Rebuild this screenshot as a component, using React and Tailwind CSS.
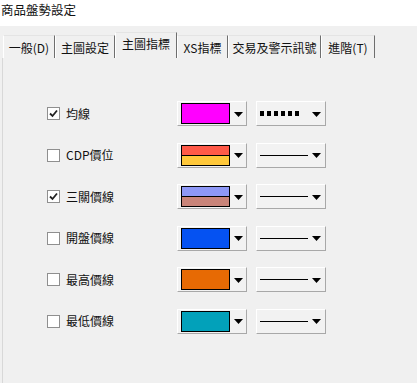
import React from "react";

const tabs = [
  { label: "一般(D)", w: "w-[52px]" },
  { label: "主圖設定", w: "w-[60px]" },
  { label: "主圖指標", w: "w-[62px]", active: true },
  { label: "XS指標", w: "w-[51px]" },
  { label: "交易及警示訊號", w: "w-[93px]" },
  { label: "進階(T)", w: "w-[54px]" },
];

const rows = [
  { label: "均線", checked: true, colors: ["#ff00ff"], dotted: true },
  { label: "CDP價位", colors: ["#ff5a48", "#ffc83a"] },
  { label: "三關價線", checked: true, colors: ["#8e98f6", "#c98479"] },
  { label: "開盤價線", colors: ["#0552f2"] },
  { label: "最高價線", colors: ["#e76a04"] },
  { label: "最低價線", colors: ["#02a1ba"] },
];

function Arrow() {
  return (
    <svg width="9" height="5" viewBox="0 0 9 5" aria-hidden>
      <path d="M0 0H9L4.5 5Z" fill="#000" />
    </svg>
  );
}

function Checkbox({ checked }) {
  return (
    <div className="flex h-[13px] w-[13px] items-center justify-center border border-[#8f8f8f] bg-white">
      {checked && (
        <svg width="9" height="9" viewBox="0 0 9 9" aria-hidden>
          <path d="M1 4.5L3.5 7L8 1.5" fill="none" stroke="#222" strokeWidth="1.8" />
        </svg>
      )}
    </div>
  );
}

function ColorCombo({ colors }) {
  return (
    <div className="flex h-[25px] w-[70px] items-center border border-b-[#a8a8a8] border-l-white border-r-[#a8a8a8] border-t-white bg-[#f2f2f2] pl-[3px]">
      <div className="flex h-[21px] w-[49px] flex-col border border-black">
        {colors.map((c, i) => (
          <div
            key={i}
            className={i > 0 ? "flex-1 border-t border-black" : "flex-1"}
            style={{ backgroundColor: c }}
          />
        ))}
      </div>
      <div className="flex flex-1 justify-center pt-[1px]">
        <Arrow />
      </div>
    </div>
  );
}

function StyleCombo({ dotted }) {
  return (
    <div className="flex h-[25px] w-[70px] items-center border border-b-[#a8a8a8] border-l-white border-r-[#a8a8a8] border-t-white bg-[#f2f2f2] pl-[3px] pr-[4px]">
      {dotted ? (
        <div className="flex w-[44px] gap-[3px]">
          {[0, 1, 2, 3, 4, 5].map((i) => (
            <div key={i} className="h-[5px] w-[4px] bg-black" />
          ))}
        </div>
      ) : (
        <div className="h-[1px] w-[48px] bg-black" />
      )}
      <div className="flex flex-1 justify-end pt-[1px]">
        <Arrow />
      </div>
    </div>
  );
}

export default function App() {
  return (
    <div
      className="flex h-[383px] w-[417px] flex-col overflow-hidden bg-[#f0f0f0] text-[12px] text-[#111]"
      style={{ fontFamily: '"Noto Sans CJK TC", "Noto Sans", sans-serif' }}
    >
      {/* title */}
      <div className="h-[26px] bg-white pl-[1px] pt-[1px] text-[12.5px] leading-[18px]">
        商品盤勢設定
      </div>

      {/* tab strip */}
      <div className="flex h-[32px] items-end pl-[3px]">
        {tabs.map((t) => (
          <div
            key={t.label}
            className={[
              "flex items-center justify-center border-l border-r border-t border-l-white border-r-[#6e6e6e] border-t-[#e4e4e4] whitespace-nowrap",
              t.w,
              t.active ? "h-[26px] bg-[#f0f0f0] pb-[3px]" : "h-[23px] pt-[1px]",
            ].join(" ")}
          >
            {t.label}
          </div>
        ))}
      </div>

      {/* panel */}
      <div className="ml-[2px] flex flex-1 flex-col border-l border-[#d8d8d8] pt-[43px]">
        <div className="flex flex-col gap-[16.5px]">
          {rows.map((r) => (
            <div key={r.label} className="flex h-[25px] items-center">
              <div className="ml-[44px]">
                <Checkbox checked={r.checked} />
              </div>
              <span className="ml-[6px] w-[111px] leading-none">{r.label}</span>
              <ColorCombo colors={r.colors} />
              <div className="ml-[9px]">
                <StyleCombo dotted={r.dotted} />
              </div>
            </div>
          ))}
        </div>
      </div>
    </div>
  );
}
